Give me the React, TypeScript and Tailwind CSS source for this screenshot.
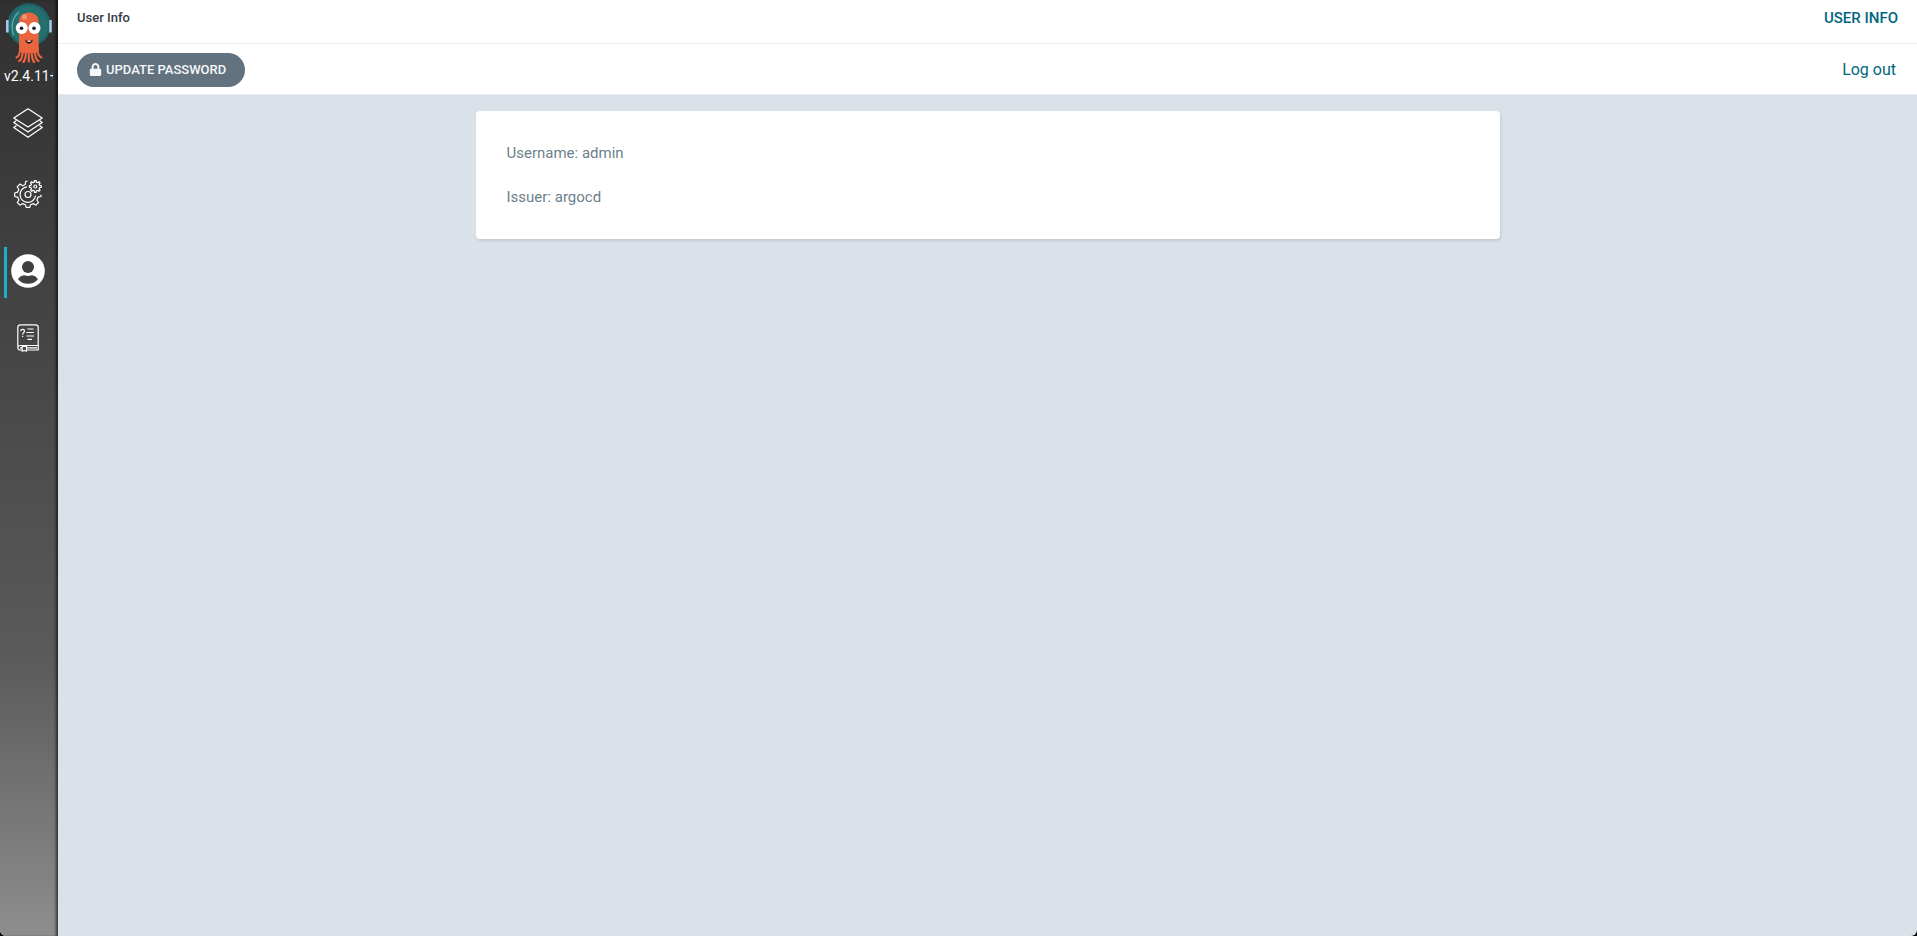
import { useState } from 'react';
import { FaLock } from 'react-icons/fa';

function ArgoLogo() {
  return (
    <svg viewBox="0 0 46 60" className="block h-[60px] w-[46px]" aria-hidden="true">
      <circle cx="23" cy="22" r="21.7" fill="#1e656a" />
      <circle cx="23" cy="22" r="19" fill="#23706f" />
      <rect x="0" y="17" width="2.600" height="12.500" rx=".600" fill="#a9c6e4" />
      <rect x="43.200" y="17" width="2.600" height="12.500" rx=".600" fill="#a9c6e4" />
      <path d="M7.500 32C4.500 23 6.500 14.500 12.500 9.500" fill="none" stroke="#6fa3a5" strokeWidth="1.300" strokeLinecap="round" />
      <path d="M13 19C13 13 17 9.500 22.800 9.500S32.600 13 32.600 19V47L30 50H16L13 47Z" fill="#e9653f" />
      {/* Tentacles */}
      <g fill="none" stroke="#e9653f" strokeWidth="2.200" strokeLinecap="round">
        <path d="M14.200 44C14.200 50 13.500 53.500 10.500 54.500" />
        <path d="M31.400 44C31.400 50 32.500 53.500 35.500 54.500" />
        <path d="M16.800 46C16.800 53 16 57 13 58" />
        <path d="M28.800 46C28.800 53 29.600 57 32.600 58" />
        <path d="M20 47C20 54 19 57 17.500 59" />
        <path d="M25.600 47C25.600 54 26.600 57 28.100 59" />
        <path d="M22.800 47V58.500" />
      </g>
      <circle cx="18.500" cy="13.800" r="2.600" fill="#f49272" />
      <circle cx="15.700" cy="25" r="6" fill="#fff" />
      <circle cx="28.500" cy="25" r="6" fill="#fff" />
      <circle cx="15.500" cy="25.200" r="1.800" fill="#15202a" />
      <circle cx="28" cy="25.200" r="1.800" fill="#15202a" />
      <path d="M19.300 36.500C21 38.500 25 38.500 26.700 36.500C26.700 42 19.300 42 19.300 36.500Z" fill="#111" />
      <path d="M21.300 37.800H24.700V38.800H21.300Z" fill="#fff" />
    </svg>
  );
}

function AppsIcon() {
  return (
    <svg viewBox="0 0 30 30" className="h-[30px] w-[30px]" fill="none" stroke="currentColor" strokeWidth="1.300" strokeLinejoin="round" aria-hidden="true">
      <path d="M15 .800L29.200 10L15 19L.800 10Z" />
      <path d="M3.500 12.500L.800 14.500L15 24L29.200 14.500L26.500 12.500" />
      <path d="M3.500 17.500L.800 19.500L15 29.200L29.200 19.500L26.500 17.500" />
    </svg>
  );
}

function gearPath(cx: number, cy: number, outer: number, inner: number, teeth: number) {
  const points: string[] = [];
  const step = (Math.PI * 2) / teeth;
  for (let i = 0; i < teeth; i++) {
    const mid = i * step - Math.PI / 2;
    const corners = [
      [inner, -0.28],
      [outer, -0.18],
      [outer, 0.18],
      [inner, 0.28],
    ];
    corners.forEach(([r, k]) => {
      const a = mid + k * step;
      points.push(`${(cx + r * Math.cos(a)).toFixed(2)} ${(cy + r * Math.sin(a)).toFixed(2)}`);
    });
  }
  return `M${points.join('L')}Z`;
}

function SettingsIcon() {
  return (
    <svg viewBox="0 0 28 28" className="h-7 w-7" fill="none" stroke="currentColor" strokeWidth="1.200" strokeLinejoin="round" strokeLinecap="round" aria-hidden="true">
      <path d="M13 1.200L11.600 1.500L11.200 4.500L8.500 5.700L6 4L3.200 6.800L4.800 9.500L3.600 12.200L.700 13V16.500L3.700 17.200L5 20L3.300 22.500L6 25.200L8.700 23.600L11.500 24.800L12.200 27.400H15.800L16.500 24.800L19.200 23.600L21.800 25.200L24.500 22.500L22.900 20L24 17.200L27 16.500V15" />
      <path d="M12.500 6.900A7.800 7.800 0 1 0 21.500 16" />
      <circle cx="14" cy="14.500" r="3" />
      <path d={gearPath(21.3, 6.5, 6, 4.5, 8)} />
      <circle cx="21.300" cy="6.500" r="1.500" />
    </svg>
  );
}

function UserIcon() {
  return (
    <svg viewBox="0 0 34 34" className="h-[34px] w-[34px]" aria-hidden="true">
      <circle cx="17" cy="17" r="16.800" fill="#fff" />
      <circle cx="17" cy="13" r="6" fill="#404040" />
      <path d="M7 25.300C9 22 12 21.300 13.500 21.300C15.500 22.100 18.500 22.100 20.500 21.300C22 21.300 25 22 27 25.300C24.500 28.300 21 29.800 17 29.800S9.500 28.300 7 25.300Z" fill="#404040" />
    </svg>
  );
}

function DocsIcon() {
  return (
    <svg viewBox="0 0 22 28" className="h-7 w-[22px]" fill="none" stroke="currentColor" strokeWidth="1.200" strokeLinejoin="round" aria-hidden="true">
      <path d="M5 26H3.500C1.800 26 .800 25 .800 23.500V3.500C.800 1.800 1.800 .800 3.500 .800H18.500C20.200 .800 21.200 1.800 21.200 3.500V21.500H3.500C1.800 21.500 .800 22.500 .800 23.500" />
      <path d="M21.200 21.500V26H10M10 23.800H20M3 23.800H5" />
      <path d="M5.200 22.500H9.500V27.300L7.400 26.500L5.200 27.300Z" />
      <path d="M3.800 7.300C3.800 4.600 7.500 4.800 7.500 7.100C7.500 8.700 5.700 8.600 5.700 10.400M5.700 11.800V13" />
      <path d="M10.500 5H16.500M9.500 8.500H17M9.500 12H17M10.500 15.300H15" />
    </svg>
  );
}

const NAV_ITEMS = [
  { id: 'applications', label: 'Applications', icon: AppsIcon, spacing: 'mt-2' },
  { id: 'settings', label: 'Settings', icon: SettingsIcon, spacing: 'mt-5' },
  { id: 'user-info', label: 'User Info', icon: UserIcon, spacing: 'mt-7 pb-1' },
  { id: 'docs', label: 'Documentation', icon: DocsIcon, spacing: 'mt-3.5' },
];

function Sidebar() {
  const [active, setActive] = useState('user-info');

  return (
    <aside className="flex w-[58px] shrink-0 flex-col bg-linear-to-b from-[#303030] from-0% via-[#5a5a5a] via-70% to-[#8e8e8e] text-white shadow-[inset_-3px_0_3px_-1px_rgba(0,0,0,0.6)]">
      <div className="px-1.5 pt-[3px]">
        <ArgoLogo />
      </div>
      <div className="ml-1 w-[49px] overflow-hidden text-sm leading-[26px] whitespace-nowrap">v2.4.11+</div>
      <nav className="flex flex-col">
        {NAV_ITEMS.map((item) => (
          <button
            key={item.id}
            type="button"
            aria-label={item.label}
            onClick={() => setActive(item.id)}
            className={`ml-1 flex h-[51px] w-[49px] cursor-pointer items-center justify-center border-l-3 pr-1 ${item.spacing} ${
              active === item.id ? 'border-[#18b2cf]' : 'border-transparent'
            }`}
          >
            <item.icon />
          </button>
        ))}
      </nav>
    </aside>
  );
}

export default function App() {
  return (
    <div className="bg-black">
      <div className="flex min-h-screen overflow-hidden rounded-b-md bg-[#dae1e8] font-[Roboto,sans-serif] text-[#6d7f8b]">
        <Sidebar />

        <div className="min-w-0 flex-1">
          {/* Top bar */}
          <header className="flex h-11 items-start justify-between border-b border-[#eceff1] bg-white px-[19px]">
            <span className="text-[13px] leading-9 font-medium text-[#363c4a]">User Info</span>
            <h1 className="text-[15px] leading-9 font-medium text-[#006680]">USER INFO</h1>
          </header>

          {/* Toolbar */}
          <div className="flex h-[51px] items-center justify-between border-b border-[#e4e9ee] bg-white pt-px pr-[21px] pl-[19px]">
            <button
              type="button"
              className="flex h-[34px] cursor-pointer items-center gap-1 rounded-full bg-[#62727f] pr-[19px] pl-3 text-[13px] font-medium text-[#f5f8fa]"
            >
              <FaLock className="h-[13px] w-[13px]" />
              UPDATE PASSWORD
            </button>
            <a href="#logout" className="text-base text-[#006680]">Log out</a>
          </div>

          {/* Account details */}
          <main className="px-4 pt-4">
            <section className="mx-auto max-w-5xl rounded bg-white px-[31px] py-5 text-[15px] leading-11 shadow-[1px_2px_3px_rgba(0,0,0,0.1)]">
              <p>Username: admin</p>
              <p>Issuer: argocd</p>
            </section>
          </main>
        </div>
      </div>
    </div>
  );
}
